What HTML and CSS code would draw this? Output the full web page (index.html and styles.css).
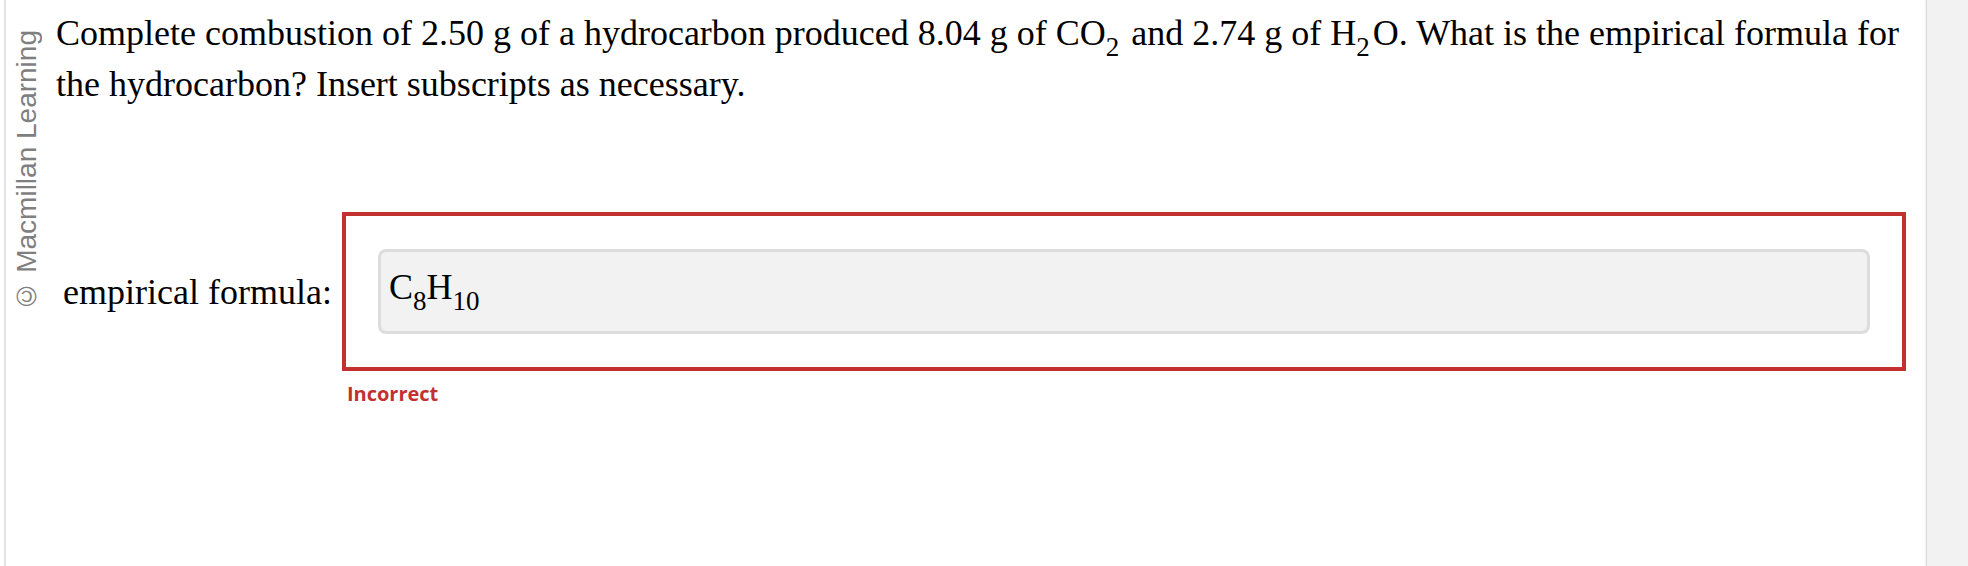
FILE: index.html
```html
<!DOCTYPE html>
<html lang="en">
<head>
<meta charset="utf-8">
<title>Empirical formula</title>
<link rel="stylesheet" href="styles.css">
</head>
<body>
<div class="page">
  <div class="main">
    <aside class="credit"><span class="credit-text">© Macmillan Learning</span></aside>
    <div class="content">
      <p class="question">Complete combustion of 2.50 g of a hydrocarbon produced 8.04 g of CO<sub>2</sub> and 2.74 g of H<sub>2</sub>O. What is the empirical formula for the hydrocarbon? Insert subscripts as necessary.</p>
      <div class="answer-grid">
        <label class="answer-label">empirical formula:</label>
        <div class="answer-box">
          <div class="answer-input"><span class="formula">C<sub>8</sub>H<sub>10</sub></span></div>
        </div>
        <div class="feedback">Incorrect</div>
      </div>
    </div>
  </div>
  <div class="side-panel"></div>
</div>
</body>
</html>
```
FILE: styles.css
```css
html, body {
  margin: 0;
  padding: 0;
  background: #ffffff;
}

.page {
  display: flex;
  height: 566px;
  overflow: hidden;
}

.main {
  flex: 1;
  display: flex;
  margin-left: 4px;
  border-left: 2px solid #e3e3e3;
}

.credit {
  flex: none;
  width: 50px;
  display: flex;
  align-items: flex-start;
  padding-top: 30px;
  padding-left: 7px;
  box-sizing: border-box;
}

.credit-text {
  writing-mode: vertical-rl;
  transform: rotate(180deg);
  font-family: "Liberation Sans", Arial, sans-serif;
  font-size: 28px;
  line-height: 28px;
  color: #7f7f7f;
  white-space: nowrap;
}

.content {
  flex: 1;
  padding-right: 20px;
}

.question {
  margin: 8px 0 0;
  font-family: "Liberation Serif", "Times New Roman", serif;
  font-size: 36px;
  line-height: 51px;
  color: #000;
}

.question sub,
.formula sub {
  font-size: 0.75em;
  vertical-align: -0.42em;
  line-height: 0;
}

.question sub {
  margin-right: 3px;
}

.answer-grid {
  display: grid;
  grid-template-columns: auto 1fr;
  column-gap: 10px;
  align-items: center;
  margin-top: 102px;
  margin-left: 7px;
}

.answer-label {
  font-family: "Liberation Serif", "Times New Roman", serif;
  font-size: 36px;
  line-height: 44px;
  color: #000;
}

.answer-box {
  border: 4px solid #c23030;
  padding: 33px 32px;
}

.answer-input {
  box-sizing: content-box;
  display: flex;
  align-items: center;
  padding: 0 8px 10px;
  height: 69px;
  background: #f2f2f2;
  border: 3px solid #dddddd;
  border-radius: 8px;
  font-family: "Liberation Serif", "Times New Roman", serif;
  font-size: 36px;
  line-height: 40px;
  color: #000;
}

.feedback {
  grid-column: 2;
  margin-top: 8px;
  padding-left: 5px;
  font-family: "Open Sans", sans-serif;
  font-weight: 700;
  font-size: 20px;
  line-height: 30px;
  color: #c23030;
}

.side-panel {
  flex: none;
  width: 41px;
  background: #f2f2f2;
  border-left: 1px solid #dadada;
  box-shadow: -1px 0 2px rgba(0, 0, 0, 0.06);
}
```
